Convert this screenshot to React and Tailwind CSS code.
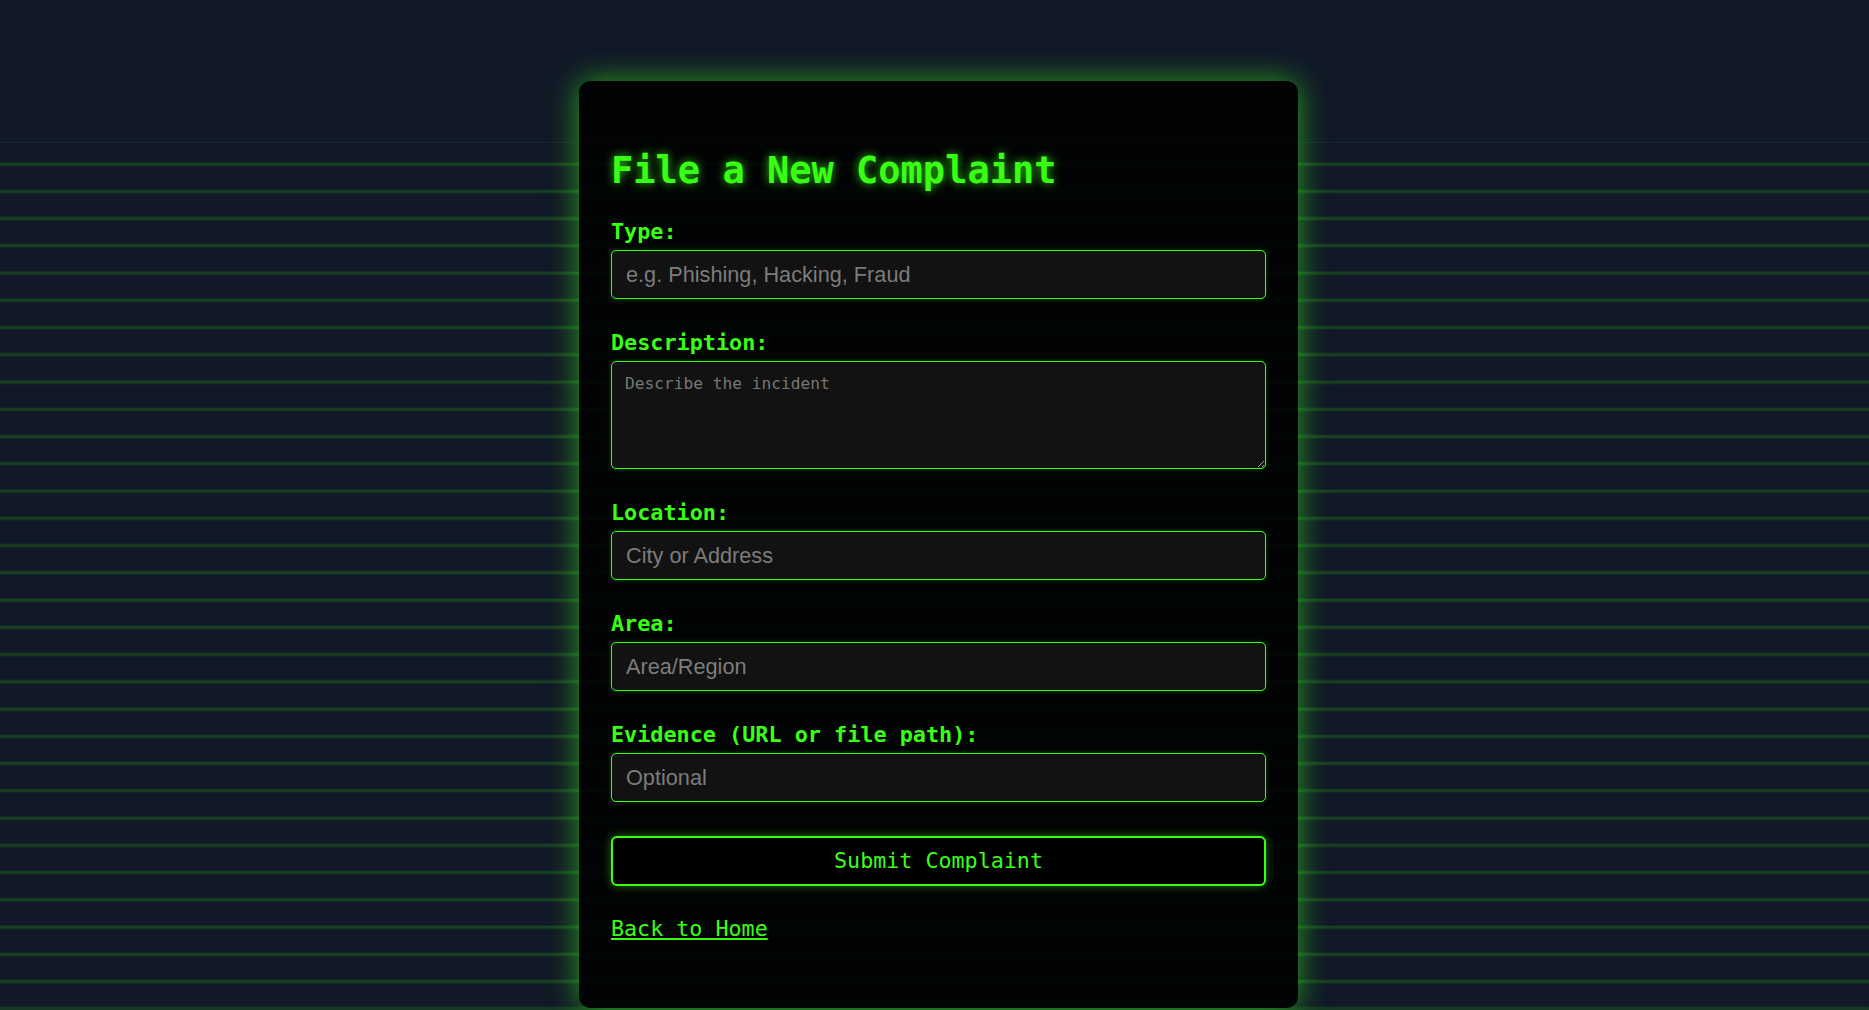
import React, { useState } from "react";

const fields = [
  { name: "type", label: "Type:", placeholder: "e.g. Phishing, Hacking, Fraud" },
  { name: "description", label: "Description:", placeholder: "Describe the incident", multiline: true },
  { name: "location", label: "Location:", placeholder: "City or Address" },
  { name: "area", label: "Area:", placeholder: "Area/Region" },
  { name: "evidence", label: "Evidence (URL or file path):", placeholder: "Optional" },
];

const NewComplaint = () => {
  const [form, setForm] = useState({
    type: "",
    description: "",
    location: "",
    area: "",
    evidence: "",
  });

  const handleChange = (e) => {
    setForm({ ...form, [e.target.name]: e.target.value });
  };

  const handleSubmit = (e) => {
    e.preventDefault();
  };

  return (
    <div className="min-h-screen flex justify-center pl-2 pt-[81px] bg-[#111827] [background-image:linear-gradient(to_bottom,#111827_0,#111827_142px,rgba(57,255,20,0.07)_142px,rgba(57,255,20,0.07)_143px,transparent_143px),repeating-linear-gradient(to_bottom,rgba(57,255,20,0.08)_0,rgba(57,255,20,0.2)_2px,rgba(57,255,20,0.08)_4px,transparent_4px,transparent_27.25px)] [background-position:0_0,0_-1.5px] font-['DejaVu_Sans_Mono',monospace]">
      {/* Card */}
      <div className="w-[719px] self-start rounded-xl bg-black/[0.88] px-8 pt-[68px] pb-[65px] shadow-[0_0_30px_rgba(57,255,20,0.6)]">
        <h2 className="text-[37px] leading-[43px] font-bold text-[#39ff14] mb-[27px] [text-shadow:0_0_10px_rgba(57,255,20,0.8)]">
          File a New Complaint
        </h2>

        <form onSubmit={handleSubmit}>
          <div className="flex flex-col gap-[31px]">
            {fields.map((f) => (
              <div key={f.name}>
                <label className="block mb-[5px] text-[21.8px] leading-[26px] font-bold text-[#39ff14]">
                  {f.label}
                </label>
                {f.multiline ? (
                  <textarea
                    name={f.name}
                    value={form[f.name]}
                    onChange={handleChange}
                    placeholder={f.placeholder}
                    className="block w-full h-[108px] px-[13px] pt-[12px] rounded-[5px] border border-[#39ff14] bg-[#121212] text-[16.2px] leading-[19px] text-[#39ff14] font-['DejaVu_Sans_Mono',monospace] placeholder:text-[#777] shadow-[0_0_5px_rgba(57,255,20,0.25)] outline-none"
                  />
                ) : (
                  <input
                    name={f.name}
                    value={form[f.name]}
                    onChange={handleChange}
                    placeholder={f.placeholder}
                    className="block w-full h-[49px] px-[14px] rounded-[5px] border border-[#39ff14] bg-[#121212] text-[21.7px] text-[#39ff14] font-['Liberation_Sans',Arial,sans-serif] placeholder:text-[#7c7c7c] shadow-[0_0_5px_rgba(57,255,20,0.25)] outline-none"
                  />
                )}
              </div>
            ))}
          </div>

          {/* Submit */}
          <button
            type="submit"
            className="block w-full h-[50px] mt-[34px] rounded-[6px] border-2 border-[#39ff14] bg-black text-[21.7px] text-[#39ff14] shadow-[0_0_8px_rgba(57,255,20,0.45)]"
          >
            Submit Complaint
          </button>
        </form>

        <a
          href="#"
          className="inline-block mt-[30px] text-[21.7px] leading-[26px] text-[#39ff14] underline"
        >
          Back to Home
        </a>
      </div>
    </div>
  );
};

export default function App() {
  return <NewComplaint />;
}
